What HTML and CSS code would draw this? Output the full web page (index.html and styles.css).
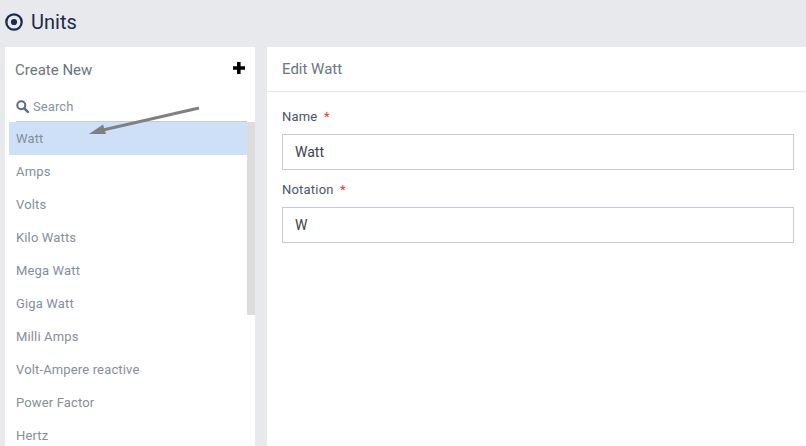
FILE: index.html
```html
<!DOCTYPE html>
<html lang="en">
<head>
	<meta charset="UTF-8">
	<title>Units</title>
	<link rel="stylesheet" href="styles.css">
</head>
<body>
<div class="page-title">
	<svg class="title-icon" width="18" height="18" viewBox="0 0 18 18"><circle cx="9" cy="9" r="7.700" fill="none" stroke="#1b2a4e" stroke-width="2.300"/><circle cx="9" cy="9" r="3.100" fill="#1b2a4e"/></svg>
	<h1>Units</h1>
</div>
<div class="mainbody">
	<div class="side">
		<div class="side-head">
			<span>Create New</span>
			<svg class="plus" width="14" height="14" viewBox="0 0 14 14"><path d="M5 1h3.600v4.200H13v3.600H8.600V13H5V8.800H1V5.200h4z" fill="#000"/></svg>
		</div>
		<div class="search">
			<svg width="13" height="13" viewBox="0 0 13 13"><circle cx="5.300" cy="5.300" r="4" fill="none" stroke="#5c6b7a" stroke-width="2"/><path d="M8.300 8.300l3.500 3.500" stroke="#5c6b7a" stroke-width="2.400" stroke-linecap="round"/></svg>
			<span>Search</span>
		</div>
		<div class="list-wrap">
			<ul>
				<li class="actived">Watt</li>
				<li>Amps</li>
				<li>Volts</li>
				<li>Kilo Watts</li>
				<li>Mega Watt</li>
				<li>Giga Watt</li>
				<li>Milli Amps</li>
				<li>Volt-Ampere reactive</li>
				<li>Power Factor</li>
				<li>Hertz</li>
			</ul>
			<div class="scroll-thumb"></div>
		</div>
	</div>
	<div class="content">
		<div class="content-head">Edit Watt</div>
		<form class="edit-form">
			<label>Name <i>*</i></label>
			<div class="field">Watt</div>
			<label>Notation <i>*</i></label>
			<div class="field">W</div>
		</form>
	</div>
</div>
<svg class="arrow" width="806" height="446" viewBox="0 0 806 446"><path d="M199 108L103 130" stroke="#808080" stroke-width="3"/><path d="M89 134L103 124.500L106 134z" fill="#808080"/></svg>
</body>
</html>
```
FILE: styles.css
```css
html,body{height:100%;}
body{margin:0;background:#e8e9ed;font-family:Roboto,"Liberation Sans",sans-serif;overflow:hidden;height:446px;display:flex;flex-direction:column;}
ul,li{list-style:none;padding:0;margin:0;}
.page-title{height:47px;flex:none;display:flex;align-items:center;padding-left:5px;padding-bottom:3px;box-sizing:border-box;}
.page-title h1{margin:0 0 0 8px;font-size:20px;font-weight:400;color:#1b2a4e;}
.title-icon{flex:none;}
.mainbody{flex:1;display:flex;gap:12px;padding-left:5px;min-height:0;}
.side{width:250px;flex:none;background:#fff;overflow:hidden;}
.side-head{height:45px;padding:0 9px 0 10px;display:flex;justify-content:space-between;align-items:center;font-size:15px;color:#6b7682;}
.plus{margin-top:-3px;}
.search{margin-left:11px;height:30px;display:flex;align-items:center;gap:4px;font-size:13px;letter-spacing:.1px;color:#8b929e;border-bottom:1px solid #c9ccd4;margin-right:8px;box-sizing:border-box;}
.list-wrap{position:relative;padding-left:4px;}
.list-wrap ul{width:238px;}
.list-wrap li{height:33px;line-height:33px;padding-left:7px;font-size:13px;letter-spacing:.15px;color:#868e99;}
.list-wrap .actived{background:#cde0f7;}
.scroll-thumb{position:absolute;right:0;top:0;width:8px;height:193px;background:#dcdcdc;}
.content{flex:1;background:#fff;}
.content-head{height:44px;line-height:44px;padding-left:15px;font-size:15px;color:#6b7682;border-bottom:1px solid #e9eaee;}
.edit-form{padding:15px 12px 0 15px;display:flex;flex-direction:column;}
.edit-form label{font-size:13px;line-height:20px;color:#4a5568;margin-bottom:7px;letter-spacing:.2px;}
.edit-form label i{color:#f0372a;font-style:normal;margin-left:3px;}
.field{height:36px;box-sizing:border-box;border:1px solid #c9c9d6;line-height:34px;padding-left:12px;font-size:14px;color:#3b4148;margin-bottom:10px;}
.arrow{position:absolute;left:0;top:0;pointer-events:none;}
```
